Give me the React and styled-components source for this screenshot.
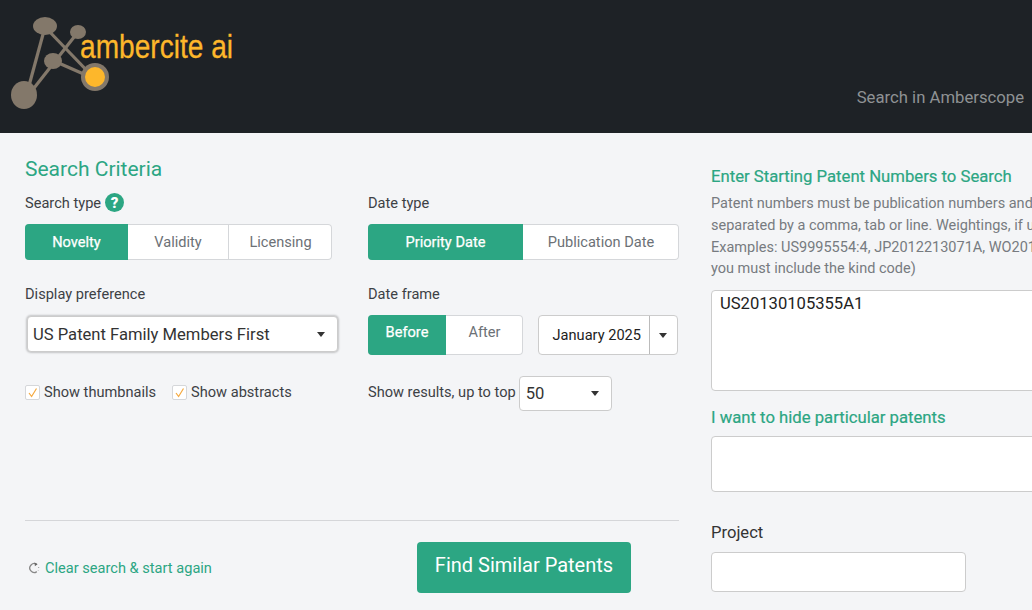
import React from "react";
import styled, { createGlobalStyle } from "styled-components";

const Global = createGlobalStyle`
  html, body { margin: 0; padding: 0; height: 100%; overflow: hidden; }
  body { background: #f4f5f7; font-family: Roboto, "Liberation Sans", sans-serif; color: #333; }
`;
const Page = styled.div`width: 1032px; height: 610px; overflow: hidden;`;
const Header = styled.header`
  height: 133px; background: #1e2226; display: flex; justify-content: space-between; align-items: flex-start;
`;
const Brand = styled.div`display: flex; width: 240px; height: 112px; margin: 9px 0 0 8px;`;
const Amberscope = styled.a`margin: 88px 8px 0 0; color: #8f9294; font-size: 16.7px; line-height: 20px;`;
const Main = styled.main`display: flex; align-items: flex-start;`;
const Left = styled.section`width: 654px; margin-left: 25px; flex: none; padding-top: 24px;`;
const Right = styled.section`width: 330px; margin-left: 32px; flex: none; padding-top: 34px;`;
const Title = styled.h2`margin: 0; font-size: 21px; line-height: 24px; font-weight: 400; color: #2ca683;`;
const Columns = styled.div`display: grid; grid-template-columns: 343px 311px; margin-top: 12px;`;
const Field = styled.div`display: flex; flex-direction: column; height: ${p => p.$h}px;`;
const Label = styled.label`display: flex; flex: none; align-items: center; gap: 4px; height: 20px; font-size: 14.6px; color: #3d4145; margin-bottom: ${p => p.$mb ?? 11}px;`;
const Help = styled.svg`width: 19px; height: 19px; margin-top: -2px;`;
const Segments = styled.div`
  display: flex; width: ${p => p.$w}px; height: ${p => p.$h}px; background: #fff;
  border-radius: 4px; box-shadow: inset 0 0 0 1px #d5d7da; overflow: hidden; flex: none;
`;
const Segment = styled.div`
  width: ${p => p.$w}px; flex: none; box-sizing: border-box; display: flex; align-items: center; justify-content: center;
  padding-bottom: ${p => p.$pb ?? 1}px; font-size: 14.6px; font-weight: 400;
  color: ${p => (p.$on ? "#fff" : "#6c7176")}; background: ${p => (p.$on ? "#2ca683" : "transparent")};
  -webkit-text-stroke: ${p => (p.$on ? ".25px #fff" : "0")};
  border-right: ${p => (p.$div ? "1px solid #d5d7da" : "none")};
`;
const Select = styled.div`
  box-sizing: border-box; display: flex; align-items: center; justify-content: space-between; background: #fff;
  border-radius: 4px; border: 1px solid #ccc; color: #333;
  width: ${p => p.$w}px; height: ${p => p.$h}px; margin-left: ${p => p.$ml ?? 0}px;
  padding: 0 ${p => p.$pr}px 0 ${p => p.$pl}px; font-size: 16.6px; flex: none;
  box-shadow: ${p => (p.$raised ? "0 0 2px 1px rgba(0,0,0,.2)" : "none")};
`;
const Caret = styled.span`width: 0; height: 0; border: 4px solid transparent; border-top: 5px solid #333; border-bottom: 0; flex: none;`;
const Row = styled.div`display: flex; flex: none; align-items: center; margin-top: ${p => p.$mt ?? 0}px;`;
const Checks = styled.div`display: flex; gap: 16px; margin-top: 30px; height: 20px; align-items: center;`;
const Check = styled.label`display: flex; align-items: center; gap: 4px; font-size: 14.6px; color: #3d4145;`;
const Box = styled.span`
  width: 13px; height: 13px; border-radius: 2px; background: #fff; border: 1px solid #d5d7da;
  display: flex; align-items: center; justify-content: center; flex: none;
`;
const DateBox = styled.div`
  box-sizing: border-box; width: 140px; height: 40px; margin-left: 15px; background: #fff; display: flex;
  border: 1px solid #ccc; border-radius: 4px; font-size: 14.6px; color: #222;
`;
const DateValue = styled.div`width: 111px; flex: none; display: flex; align-items: center; justify-content: flex-end; padding-right: 8px; box-sizing: border-box; border-right: 1px solid #bbb;`;
const DateCaret = styled.div`flex: 1; display: flex; align-items: center; justify-content: center; padding-right: 2px;`;
const ResultText = styled.span`font-size: 14.6px; color: #3d4145; margin: 0 3px 3px 0;`;
const Rule = styled.hr`margin: 109px 0 0; border: 0; border-top: 1px solid #d5d6d9;`;
const Footer = styled.div`display: flex; align-items: center; height: 51px; margin-top: 21px;`;
const Clear = styled.a`display: flex; align-items: center; gap: 5px; width: 389px; margin-left: 3px; font-size: 14.6px; color: #2ca683; flex: none;`;
const Primary = styled.button`
  width: 214px; height: 51px; border: 0; border-radius: 4px; background: #2ca683; color: #fff; padding: 0 0 5px;
  font: 400 20px Roboto, sans-serif; flex: none;
`;
const Heading = styled.h3`margin: ${p => p.$mt ?? 0}px 0 0; font-size: 16.7px; line-height: 20px; font-weight: 400; color: #2ca683; white-space: nowrap; -webkit-text-stroke: .2px #2ca683;`;
const Help2 = styled.p`margin: 6px 0 0; font-size: 14.5px; line-height: 21.8px; color: #777b80; white-space: nowrap; overflow: visible;`;
const Area = styled.div`
  box-sizing: border-box; width: 340px; height: ${p => p.$h}px; background: #fff; border: 1px solid #ccc; border-radius: 4px;
  padding: 4px 8px; font-size: 16.6px; line-height: 18px; color: #222; margin-top: ${p => p.$mt}px;
`;
const ProjectLabel = styled.label`display: block; margin-top: 31px; font-size: 16.6px; line-height: 20px; color: #333;`;
const Input = styled.div`box-sizing: border-box; width: 255px; height: 40px; margin-top: 9px; background: #fff; border: 1px solid #ccc; border-radius: 4px;`;

const Logo = () => (
  <svg width="240" height="112" viewBox="0 0 240 112" fill="none">
    <g stroke="#83786a" strokeWidth="3.2">
      <line x1="37" y1="18" x2="19" y2="84" />
      <line x1="37" y1="18" x2="87" y2="70" />
      <line x1="70" y1="23" x2="19" y2="88" />
      <line x1="46" y1="52" x2="87" y2="70" />
    </g>
    <g fill="#83786a">
      <ellipse cx="37" cy="17" rx="12" ry="9" />
      <ellipse cx="70" cy="23" rx="8" ry="7" />
      <ellipse cx="45" cy="52" rx="9" ry="8" />
      <ellipse cx="16" cy="86" rx="13" ry="14" />
      <circle cx="87" cy="68" r="14" />
    </g>
    <circle cx="87" cy="68" r="10" fill="#fdb72b" />
    <text transform="translate(72 49) scale(.827 1)" fontFamily="'Liberation Sans', sans-serif" fontSize="34" fill="#fdb72b" stroke="#fdb72b" strokeWidth="0.3">ambercite ai</text>
  </svg>
);
const Tick = () => (
  <svg width="11" height="11" viewBox="0 0 11 11" fill="none"><path d="M2 6l2.6 3.5L9.5 1.5" stroke="#f5a93f" strokeWidth="1.2" /></svg>
);

export default function App() {
  return (
    <Page>
      <Global />
      <Header>
        <Brand><Logo /></Brand>
        <Amberscope>Search in Amberscope</Amberscope>
      </Header>
      <Main>
        <Left>
          <Title>Search Criteria</Title>
          <Columns>
            <Field $h={91}>
              <Label>Search type
                <Help viewBox="0 0 19 19"><circle cx="9.5" cy="9.5" r="9.5" fill="#2ca683" /><text x="9.5" y="15" textAnchor="middle" fontFamily="Roboto" fontWeight="900" fontSize="15" fill="#fff">?</text></Help>
              </Label>
              <Segments $w={307} $h={36}>
                <Segment $w={103} $on>Novelty</Segment>
                <Segment $w={101} $div>Validity</Segment>
                <Segment $w={103}>Licensing</Segment>
              </Segments>
            </Field>
            <Field $h={91}>
              <Label>Date type</Label>
              <Segments $w={311} $h={36}>
                <Segment $w={155} $on>Priority Date</Segment>
                <Segment $w={156}>Publication Date</Segment>
              </Segments>
            </Field>
            <Field $h={127}>
              <Label $mb={12}>Display preference</Label>
              <Select $w={311} $h={36} $pl={5} $pr={12} $ml={2} $raised>US Patent Family Members First<Caret /></Select>
              <Checks>
                <Check><Box><Tick /></Box>Show thumbnails</Check>
                <Check><Box><Tick /></Box>Show abstracts</Check>
              </Checks>
            </Field>
            <Field $h={127}>
              <Label>Date frame</Label>
              <Row>
                <Segments $w={155} $h={40}>
                  <Segment $w={78} $on $pb={6}>Before</Segment>
                  <Segment $w={77} $pb={6}>After</Segment>
                </Segments>
                <DateBox>
                  <DateValue>January 2025</DateValue>
                  <DateCaret><Caret /></DateCaret>
                </DateBox>
              </Row>
              <Row $mt={21}>
                <ResultText>Show results, up to top</ResultText>
                <Select $w={93} $h={35} $pl={6} $pr={12}>50<Caret /></Select>
              </Row>
            </Field>
          </Columns>
          <Rule />
          <Footer>
            <Clear>
              <svg width="12" height="12" viewBox="0 0 12 12" fill="none">
                <path d="M9 2.6A4.4 4.4 0 1 0 8.8 9.6" stroke="#888" strokeWidth="1.3" />
                <path d="M6.5 0.5l3 1.8-2.6 2z" fill="#666" />
                <path d="M10.6 5v1M10.3 8v.6" stroke="#aaa" strokeWidth="1.2" />
              </svg>
              Clear search &amp; start again
            </Clear>
            <Primary>Find Similar Patents</Primary>
          </Footer>
        </Left>
        <Right>
          <Heading>Enter Starting Patent Numbers to Search</Heading>
          <Help2>
            Patent numbers must be publication numbers and<br />
            separated by a comma, tab or line. Weightings, if used<br />
            Examples: US9995554:4, JP2012213071A, WO2013<br />
            you must include the kind code)
          </Help2>
          <Area $h={101} $mt={10}>US20130105355A1</Area>
          <Heading $mt={17}>I want to hide particular patents</Heading>
          <Area $h={56} $mt={8} />
          <ProjectLabel>Project</ProjectLabel>
          <Input />
        </Right>
      </Main>
    </Page>
  );
}
